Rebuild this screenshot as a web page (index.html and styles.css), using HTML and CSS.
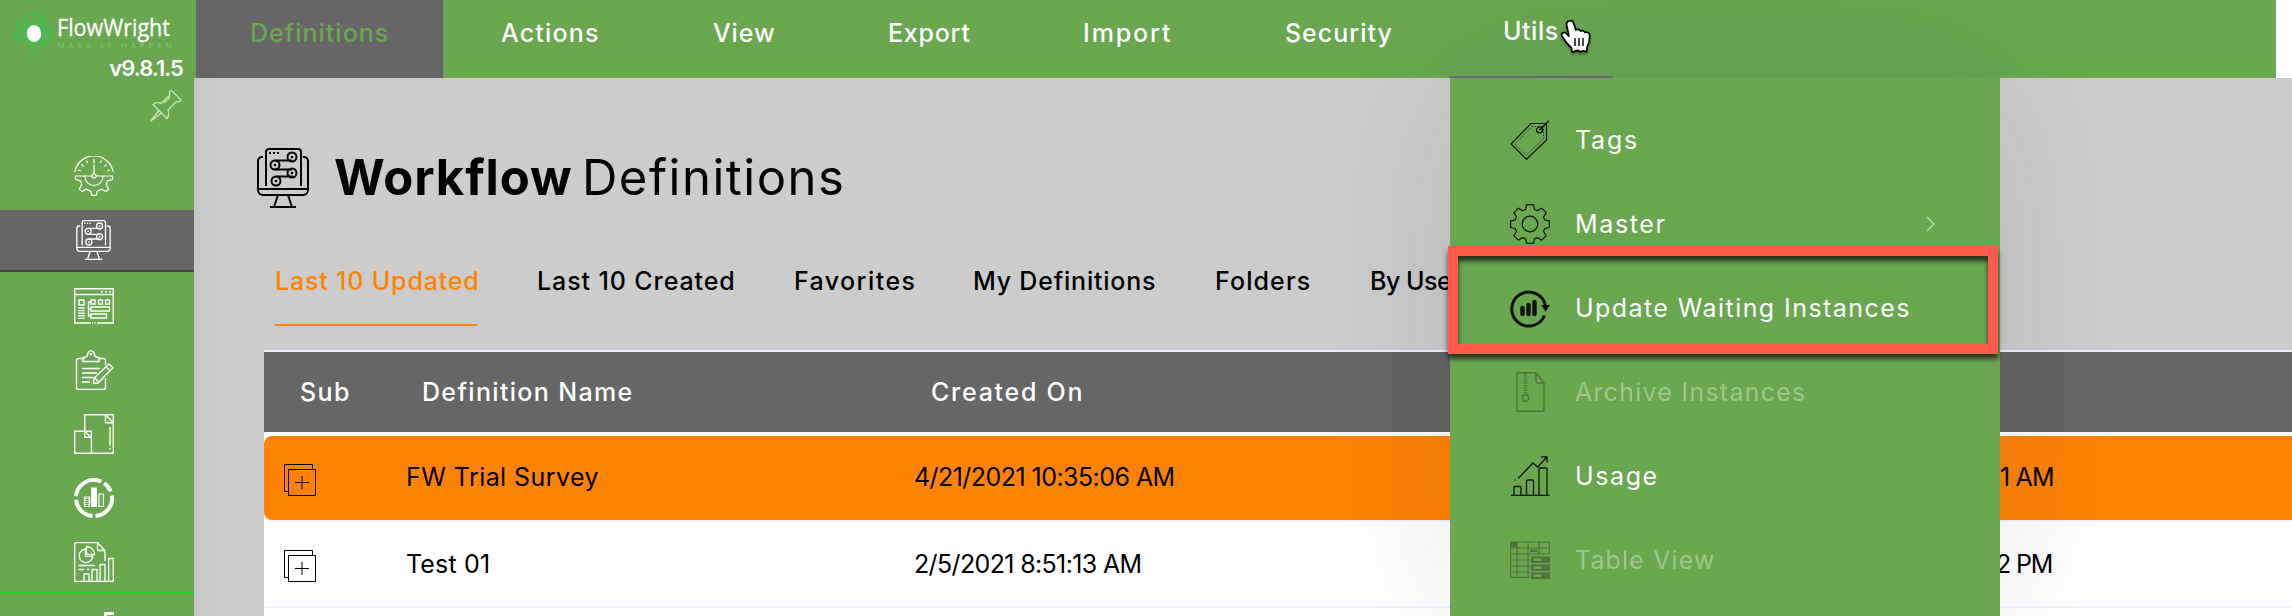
FILE: index.html
```
<!DOCTYPE html>
<html lang="en">
<head>
<meta charset="utf-8">
<title>Workflow Definitions</title>
<link rel="stylesheet" href="styles.css">
</head>
<body>
<svg class="defs" width="0" height="0" aria-hidden="true">
  <symbol id="monitor" viewBox="0 0 52 60">
    <g fill="none" stroke="currentColor" stroke-width="2">
      <path d="M9 38V4a3 3 0 0 1 3-3h29a3 3 0 0 1 3 3v34"/>
      <path d="M6 9H5a4 4 0 0 0-4 4v29a5 5 0 0 0 5 5h40a5 5 0 0 0 5-5V13a4 4 0 0 0-4-4h-1M1 41h50"/>
      <path d="M21 47l-4 12M31 47l4 12M13 59h26"/>
      <circle cx="35" cy="9" r="4.500"/><circle cx="18" cy="17" r="4.500"/><circle cx="35" cy="25" r="4.500"/><circle cx="19" cy="33" r="4.500"/>
      <path d="M18 12.500h17M18 21.500h17M19 28.500h17"/>
    </g>
    <g fill="currentColor"><circle cx="35" cy="9" r="1.300"/><circle cx="18" cy="17" r="1.300"/><circle cx="35" cy="25" r="1.300"/><circle cx="19" cy="33" r="1.300"/><path d="M12 4h2v2h-2zM16 4h2v2h-2zM20 4h2v2h-2z"/></g>
  </symbol>
  <symbol id="subflow" viewBox="0 0 32 32">
    <path d="M4.500 27.500H.5V.5h28v5M4.500 5.500h27v26h-27zM18 12v13M11 18.500h14" fill="none" stroke="currentColor"/>
  </symbol>
</svg>

<div class="app">
  <aside class="sidebar">
    <svg class="logo" width="194" height="56" viewBox="0 0 194 56">
      <g fill="none" stroke="#4cba50">
        <circle cx="34" cy="33" r="11" stroke-width="4.500"/>
        <path d="M19 43a17.500 19 0 0 1 4-25M27 15.500a17 18 0 0 1 21 8M50 28a17 18 0 0 1-5 18M41 50a17 18 0 0 1-14 1" stroke-width="3.500"/>
      </g>
      <ellipse cx="34" cy="33.500" rx="7.200" ry="8.600" fill="#fff"/>
      <text class="brand" x="57" y="35.500" textLength="113" lengthAdjust="spacingAndGlyphs">FlowWright</text>
      <text class="motto" x="57.500" y="48" textLength="114">MAKE IT HAPPEN</text>
    </svg>
    <div class="version">v9.8.1.5</div>
    <div class="pin">
      <svg width="32" height="32" viewBox="0 0 32 32" fill="none" stroke="#c4e8b4" stroke-width="1.300" stroke-linejoin="round">
        <path d="M20 1c1-1 2 0 3 1l7 7c1 1 1 2 0 2.500-1.500.5-3 0-4 .5l-8 8c1 3 1 6-1 8.500L3 14.500c2-2 5.500-2 8-1l8.500-8c.5-1.500-.5-3 .500-4.500z"/>
        <path d="M9 20.500L.8 31 11.500 23M14 13l6-6"/>
      </svg>
    </div>
    <nav class="side-nav">
      <a class="side-item">
        <svg width="40" height="40" viewBox="0 0 40 40" fill="none" stroke="#fff" stroke-width="1.200">
          <path d="M.8 16a19.500 19.500 0 0 1 38.400 0M20 3v4M20 8.500V18M12.500 4.500l1.200 2.600M27.500 4.500l-1.200 2.600M7.500 8.500l2 2M32.500 8.500l-2 2M4 14l2.800 1M36 14l-2.800 1"/>
          <circle cx="20" cy="20" r="2"/>
          <path d="M18 20H1.500v3.600l5 1.200 1.300 3.600L5.300 33 8 35.500l4.300-2.300 4.300 2 1.300 4.200h4.200l1.300-4.200 4.300-2 4.300 2.300 2.700-2.500-2.500-4.600 1.300-3.600 5-1.200V20H22M11 20.500a9 9 0 0 0 18 0"/>
        </svg>
      </a>
      <a class="side-item current"><svg class="mini" width="35" height="40"><use href="#monitor"/></svg></a>
      <a class="side-item">
        <svg width="40" height="36" viewBox="0 0 40 36" fill="none" stroke="#fff" stroke-width="1.400">
          <path d="M17 35H.7V.7h38.600V35H23M.7 6.500h38.600M27 3.700h2M31 3.700h2M35 3.700h2"/>
          <path d="M5 12h5v5H5zM4.300 20h6.400M4.300 22.600h6.400M4.300 25.200h6.400M4.300 27.800h6.400M4.300 30.400h6.400"/>
          <path d="M17 12h4v4h-4zM24.500 12h4v4h-4zM31.500 12h4v4h-4zM17 19h18.500v4H17zM17 26h15.500v4H17zM17 14h-2.500v14H17M14.500 21H17"/>
          <path d="M18 35h1.200M20.500 35h1.200"/>
        </svg>
      </a>
      <a class="side-item">
        <svg width="40" height="40" viewBox="0 0 40 40" fill="none" stroke="#fff" stroke-width="1.400">
          <path d="M11 8.500H4.500a2 2 0 0 0-2 2v27a2 2 0 0 0 2 2h25a2 2 0 0 0 2-2V28M31.500 15v-4.500a2 2 0 0 0-2-2H24"/>
          <path d="M9 11.500V7.500l4-1c.5-3.500 2-5.800 4-5.800s3.500 2.300 4 5.800l4 1v4z"/><circle cx="17" cy="4.300" r=".7"/>
          <path d="M8 18.500h18M8 23h15M8 27.500h11M8 32h8"/>
          <path d="M19.500 33.500l.5-5.200L35 14l4 3.800L24 33zM32 17l4 3.800M21 28l3.500 4"/>
        </svg>
      </a>
      <a class="side-item">
        <svg width="40" height="40" viewBox="0 0 40 40" fill="none" stroke="#fff" stroke-width="1.400">
          <path d="M17.500 39.300H.7v-22h16.600zM10.800 17.300V.7h28.500v38.600H17.500"/>
          <path d="M31.500.7v8h7.800M31.500.7l7.800 8M10.800 17.300v6h6.500M10.800 17.300l6 6M36 13v18.500M36 34v1.500"/>
        </svg>
      </a>
      <a class="side-item">
        <svg width="40" height="40" viewBox="0 0 40 40" fill="none" stroke="#fff">
          <path d="M2 18.300A18 18 0 0 1 27.300 3.500M30.200 5.100A18 18 0 0 1 36.700 13.500M38 17.500A18 18 0 0 1 21.500 38M18.500 38A18 18 0 0 1 2 21.700" stroke-width="4"/>
          <path d="M17 9.500h6V29h-6z" fill="#fff" stroke="none"/>
          <path d="M10.500 19h5v9.500h-5zM25 16h4.500v12.500H25z" stroke-width="1.200"/>
          <path d="M11.500 20v8M13 20v8M14.500 20v8" stroke-width=".9" stroke-dasharray="1 1"/>
        </svg>
      </a>
      <a class="side-item">
        <svg width="40" height="40" viewBox="0 0 40 40" fill="none" stroke="#fff" stroke-width="1.300">
          <path d="M31 19V8.500L23.500.7H2.200a1.500 1.500 0 0 0-1.500 1.500v37.100h38.600V16.500h-4.600v22.800M23.500.7V8.500H31"/>
          <path d="M11.500 7a6.800 6.800 0 1 0 7.300 7.300h-7.300zM12.500 4.500v8h8a8 8 0 0 0-8-8z"/>
          <path d="M4.500 23.500H21M4.500 27.500H10M13 27.500h2M10 39v-7h5v7M18 39V27.500h5V39M26 39V22.500h5V39"/>
        </svg>
      </a>
      <a class="side-item next"><svg width="40" height="4" viewBox="0 0 40 4"><path d="M30 1.500h10M31.500 0v4" stroke="#fff" stroke-width="3" fill="none"/></svg></a>
    </nav>
  </aside>

  <div class="page">
    <header class="topbar">
      <a class="tab-main w-definitions on">Definitions</a>
      <a class="tab-main w-actions">Actions</a>
      <a class="tab-main w-view">View</a>
      <a class="tab-main w-export">Export</a>
      <a class="tab-main w-import">Import</a>
      <a class="tab-main w-security">Security</a>
      <a class="tab-main w-utils open">Utils</a>
    </header>

    <main class="content">
      <h1 class="heading">
        <svg class="heading-icon" width="52" height="60"><use href="#monitor"/></svg>
        <b>Workflow</b><span>Definitions</span>
      </h1>
      <div class="filters">
        <a class="filter f-updated on">Last 10 Updated</a>
        <a class="filter f-created">Last 10 Created</a>
        <a class="filter f-fav">Favorites</a>
        <a class="filter f-mine">My Definitions</a>
        <a class="filter f-folders">Folders</a>
        <a class="filter f-user">By User</a>
      </div>
      <section class="grid">
        <div class="row head"><span class="h-sub">Sub</span><span class="h-name">Definition Name</span><span class="h-created">Created On</span></div>
        <div class="row picked">
          <svg class="sub" width="32" height="32"><use href="#subflow"/></svg>
          <span class="n1">FW Trial Survey</span><span class="d1">4/21/2021 10:35:06 AM</span><span class="m1">1 AM</span>
        </div>
        <div class="row">
          <svg class="sub" width="32" height="32"><use href="#subflow"/></svg>
          <span class="n2">Test 01</span><span class="d2">2/5/2021 8:51:13 AM</span><span class="m2">2 PM</span>
        </div>
      </section>
    </main>
  </div>
</div>

<div class="menu">
  <a class="menu-item">
    <svg width="40" height="40" viewBox="0 0 40 40" fill="none" stroke="#111" stroke-width="1.200">
      <path d="M21 3.500h15.500V20L16.500 39.300 1 24z"/><path d="M22 6.500h11.500v12.200L16.500 35 5 24z" stroke-width=".9" stroke-dasharray="1.200 1.600"/>
      <circle cx="29.500" cy="10" r="3"/><path d="M29.500 10L39 .8"/>
    </svg><span class="t-tags">Tags</span>
  </a>
  <a class="menu-item">
    <svg width="40" height="40" viewBox="0 0 40 40" fill="none" stroke="#111" stroke-width="1.200" stroke-linejoin="round">
      <path d="M16.500.7h7l1 4.800 3 1.300 4.200-2.600 4.500 4.600-2.700 4.100 1.300 3 4.500 1v6.600l-4.500 1-1.300 3 2.700 4.200-4.500 4.500-4.200-2.600-3 1.300-1 4.400h-7l-1-4.400-3-1.300-4.200 2.600-4.500-4.500 2.700-4.200-1.300-3-4.500-1v-6.600l4.500-1 1.300-3-2.700-4.100 4.500-4.600 4.200 2.600 3-1.300z"/>
      <circle cx="20" cy="20" r="7.800"/>
    </svg><span class="t-master">Master</span>
    <svg class="chevron" width="12" height="18" viewBox="0 0 12 18" fill="none" stroke="#b4d6a7" stroke-width="1.500"><path d="M2 2l7 7-7 7"/></svg>
  </a>
  <a class="menu-item">
    <svg width="40" height="40" viewBox="0 0 40 40" fill="none" stroke="#111">
      <path d="M34.500 27.500A17 17 0 1 1 35.500 18" stroke-width="3"/><path d="M31 17h9l-4.500 6.500z" fill="#111" stroke="none"/>
      <path d="M12.500 20v6M18.500 17v9M24.500 14V26" stroke-width="4.500" stroke-linecap="round"/>
    </svg><span class="t-update">Update Waiting Instances</span>
  </a>
  <a class="menu-item off">
    <svg width="40" height="40" viewBox="0 0 40 40" fill="none" stroke="#111" stroke-width="1.400">
      <path d="M26 .7H9a2 2 0 0 0-2 2v34.600a2 2 0 0 0 2 2h23a2 2 0 0 0 2-2V11zM26 .7V9a2 2 0 0 0 2 2h6"/>
      <path d="M15.500 1v20" stroke-width="3.500" stroke-dasharray="1.200 1.200"/><ellipse cx="15.500" cy="26" rx="3" ry="3.500"/>
    </svg><span class="t-archive">Archive Instances</span>
  </a>
  <a class="menu-item">
    <svg width="40" height="40" viewBox="0 0 40 40" fill="none" stroke="#111" stroke-width="1.300">
      <path d="M1 39.300h38.500M4 39V31.500a1 1 0 0 1 1-1h5a1 1 0 0 1 1 1V39M16.500 39V25a1 1 0 0 1 1-1h5a1 1 0 0 1 1 1V39M29 39V13a1 1 0 0 1 1-1h6a1 1 0 0 1 1 1V39"/>
      <path d="M8 22.500L23 7l4.500 4L37 1M31 .8h6v5.800M4.500 24.500l1-1"/>
    </svg><span class="t-usage">Usage</span>
  </a>
  <a class="menu-item off">
    <svg width="40" height="40" viewBox="0 0 40 40" fill="none" stroke="#111" stroke-width="1.200">
      <path d="M.7 2h38.600M.7 8h38.600M.7 14h38.600M.7 20H20M.7 26H20M.7 32H20M.7 37.500H20M.7 2v35.500M7 2v35.500M18 2v35.500M29 2v12M39.300 2v12"/>
      <path d="M1 2h6v5H1zM20 9.500h7v2.500h-7z" fill="#111" stroke="none"/>
      <path d="M21 16.500h19v6.500H21zM21 24.500h19V31H21zM21 32.500h19V39H21z" fill="#111" stroke="none"/>
      <path d="M23.500 19.800h8M23.500 27.800h8M23.500 35.800h8" stroke="#69a84f" stroke-width="2.500"/>
    </svg><span class="t-table">Table View</span>
  </a>
</div>
<div class="callout"></div>
<svg class="pointer" width="36" height="42" viewBox="0 0 36 42">
  <path d="M11 3c2-1 4 0 4.600 2l2.200 7c1.500-1.200 4-.8 4.800 1 1.600-.8 3.700-.2 4.400 1.400 2-.8 4.500.4 4.600 2.800.2 4-.3 8-2.300 11.200L28.500 34l-3-1.200-3.300 1-2.400-1.400L14 34l-.5-4c-3-3-6.500-7-9.300-11.500-1.600-2.700 1-5 3.300-3.700L11 18 8.600 7C8.200 5 9.200 3.600 11 3z" fill="#fff" stroke="#000" stroke-width="1.700" stroke-linejoin="round"/>
  <path d="M17 20v8M21 20v8M25 20v8" stroke="#000" stroke-width="1.400"/>
</svg>
</body>
</html>
```
FILE: styles.css
```
:root {
  --green: #69a84f;
  --gray: #666;
  --orange: #ff8303;
  --rule: #edf0ff;
}
* { box-sizing: border-box; }
body {
  margin: 0;
  width: 2292px;
  height: 616px;
  overflow: hidden;
  position: relative;
  background: #fff;
  color: #000;
  font: 400 25px Inter, sans-serif;
  white-space: nowrap;
}
svg { display: block; flex: none; }
.defs { position: absolute; }
.app { display: grid; grid-template-columns: 194px 1fr; height: 616px; }

/* Sidebar */
.sidebar { background: var(--green); color: #fff; overflow: hidden; }
.brand { font: 400 24px "Open Sans", sans-serif; fill: #fff; stroke: #fff; stroke-width: .3px; }
.motto { font: 400 8px "Open Sans", sans-serif; fill: #84c878; }
.version {
  height: 26px;
  padding-right: 11px;
  text-align: right;
  font-size: 22px;
  font-weight: 600;
  line-height: 25px;
  letter-spacing: -.95px;
}
.pin { height: 56px; padding: 8px 12px 0 0; display: flex; justify-content: flex-end; }
.side-nav { display: flex; flex-direction: column; }
.side-item { height: 64px; padding-right: 6px; display: flex; align-items: center; justify-content: center; color: #fff; }
.side-item:first-child { height: 72px; padding-top: 4px; }
.side-item.current { height: 62px; background: var(--gray); border-bottom: 2px solid #444; margin-bottom: 2px; padding-right: 7px; }
.side-item:nth-child(7) { height: 62px; padding-top: 2px; }
.side-item.next { height: 24px; border-top: 2px solid #32cd32; align-items: flex-end; }

/* Top navigation */
.page { display: flex; flex-direction: column; min-width: 0; min-height: 0; }
.topbar { display: flex; flex: none; height: 78px; width: 2082px; padding-left: 2px; background: var(--green); }
.tab-main { height: 78px; padding-left: 56px; color: #fff; font-weight: 500; line-height: 66px; flex: none; }
.tab-main.on { background: var(--gray); color: var(--green); }
.tab-main.open { border-bottom: 2px solid #706a78; line-height: 62px; }
.w-definitions { width: 247px; padding-left: 54px; letter-spacing: .99px; }
.w-actions { width: 212px; padding-left: 58px; letter-spacing: 1.18px; }
.w-view { width: 176px; padding-left: 58px; letter-spacing: .9px; }
.w-export { width: 196px; padding-left: 57px; letter-spacing: .75px; }
.w-import { width: 200px; letter-spacing: 1.87px; }
.w-security { width: 223px; padding-left: 58px; letter-spacing: .97px; }
.w-utils { width: 163px; padding-left: 53px; letter-spacing: .55px; }

/* Content */
.content {
  flex: 1;
  min-height: 0;
  overflow: hidden;
  padding: 70px 0 0 70px;
  background: #ccc;
  box-shadow: inset 44px 0 44px -40px rgba(110, 130, 130, .14);
}
.heading { display: flex; height: 60px; margin: 0 0 0 -7px; font-size: 49px; font-weight: 400; line-height: 59px; }
.heading b { width: 248px; margin-left: 25px; font-weight: 700; letter-spacing: .89px; }
.heading span { letter-spacing: 1.5px; }
.filters { display: flex; height: 142px; padding: 48px 0 0 11px; font-weight: 500; }
.filter { height: 70px; line-height: 50px; flex: none; }
.filter.on { color: var(--orange); border-bottom: 2px solid var(--orange); }
.f-updated { width: 202px; letter-spacing: .83px; margin-right: 60px; }
.f-created { width: 257px; letter-spacing: .9px; }
.f-fav { width: 179px; letter-spacing: 1.41px; }
.f-mine { width: 242px; letter-spacing: .78px; }
.f-folders { width: 155px; letter-spacing: 1.11px; }
.f-user { letter-spacing: -.5px; }

/* Definition table */
.grid { height: 400px; border-top: 2px solid var(--rule); background: #fff; }
.row {
  display: grid;
  grid-template-columns: 142px 508px 1082px 1fr;
  height: 86px;
  line-height: 84px;
  border-bottom: 2px solid var(--rule);
}
.row.head {
  grid-template-columns: 158px 509px 1fr;
  height: 80px;
  margin-bottom: 4px;
  border: 0;
  background: var(--gray);
  color: #fff;
  font-weight: 500;
  line-height: 80px;
}
.row.picked {
  height: 84px;
  margin-bottom: 2px;
  border: 0;
  border-radius: 8px 0 0 8px;
  background: var(--orange);
  box-shadow: 0 2px 0 var(--rule);
  line-height: 82px;
}
.sub { margin: 28px 0 0 20px; }
.h-sub { padding-left: 36px; letter-spacing: 1.41px; }
.h-name { letter-spacing: 1.33px; }
.h-created { letter-spacing: 1.73px; }
.n1 { letter-spacing: .44px; }
.n2 { letter-spacing: .18px; }
.d1 { letter-spacing: -.55px; }
.d2 { letter-spacing: -.64px; }
.m1 { padding-left: 4px; letter-spacing: -.82px; }
.m2 { padding-left: 0; letter-spacing: -1.2px; }

/* Utils dropdown, floating over the page */
.menu {
  position: absolute;
  left: 1450px;
  top: 78px;
  width: 550px;
  height: 538px;
  padding-top: 20px;
  background: var(--green);
  box-shadow: 0 0 150px rgba(30, 30, 80, .11);
}
.menu-item { display: flex; align-items: center; height: 84px; padding-left: 60px; color: #fff; line-height: 84px; }
.menu-item span { margin-left: 25px; }
.menu-item.off > * { opacity: .35; }
.menu-item .chevron { margin-left: auto; margin-right: 63px; }
.t-tags { letter-spacing: 1.8px; }
.t-master { letter-spacing: 1.65px; }
.t-update { letter-spacing: 1.43px; }
.t-archive { letter-spacing: 1.24px; }
.t-usage { letter-spacing: 1.6px; }
.t-table { letter-spacing: 1.14px; }

/* Highlight frame around the menu entry */
.callout {
  position: absolute;
  left: 1448px;
  top: 246px;
  width: 550px;
  height: 108px;
  border: 10px solid #ff5a4a;
  box-shadow: 0 5px 5px rgba(0, 0, 0, .65), inset 0 5px 5px rgba(0, 0, 0, .7);
}
.pointer { position: absolute; left: 1558px; top: 18px; filter: drop-shadow(0 2px 1px rgba(0, 0, 0, .35)); }
```
